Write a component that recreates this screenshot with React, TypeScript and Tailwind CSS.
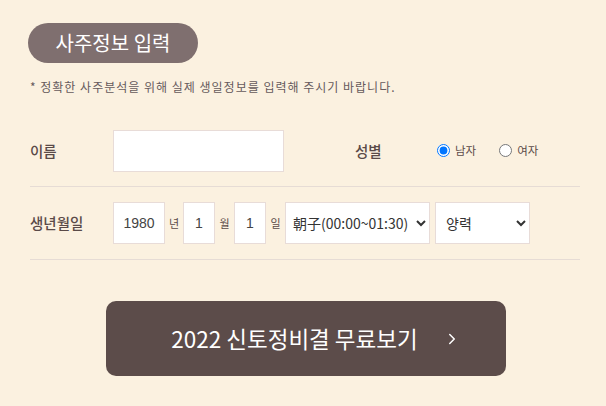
import { ChevronRight } from 'lucide-react'

export default function App() {
  return (
    <div className="w-[606px] h-[406px] bg-[#fbf1e0] pt-[23px] font-['Noto_Sans_CJK_KR','Noto_Sans',sans-serif] text-[#5a4a48] overflow-hidden">
      {/* Title pill */}
      <div className="ml-[28px] w-[170px] h-[40px] rounded-full bg-[#7f6f6f] text-white text-[20px] flex items-center justify-center">
        사주정보 입력
      </div>
      <p className="ml-[30px] mt-[15px] text-[12px] tracking-[1px] leading-[18px] text-[#665a5c]">
        * 정확한 사주분석을 위해 실제 생일정보를 입력해 주시기 바랍니다.
      </p>

      {/* Form rows */}
      <div className="ml-[30px] w-[550px] mt-[19px]">
        <div className="flex items-center h-[72px] border-b border-[#e6dcd5]">
          <span className="w-[83px] text-[14.5px] font-medium">이름</span>
          <input className="w-[171px] h-[42px] border border-[#e8dcd8] bg-white outline-none px-2 text-[14px]" />
          <span className="ml-[71px] w-[82px] text-[14.5px] font-medium">성별</span>
          <label className="flex items-center gap-[5px] text-[11.5px]">
            <input type="radio" name="gender" defaultChecked className="w-[13px] h-[13px] m-0" />
            남자
          </label>
          <label className="flex items-center gap-[5px] text-[11.5px] ml-[23px]">
            <input type="radio" name="gender" className="w-[13px] h-[13px] m-0" />
            여자
          </label>
        </div>

        <div className="flex items-center h-[73px] border-b border-[#e6dcd5]">
          <span className="w-[83px] text-[14.5px] font-medium">생년월일</span>
          <input defaultValue="1980" className="w-[52px] h-[42px] border border-[#e8dcd8] bg-white outline-none text-center text-[14px] text-[#444] font-['Liberation_Sans',sans-serif]" />
          <span className="w-[18px] text-center text-[11px]">년</span>
          <input defaultValue="1" className="w-[32px] h-[42px] border border-[#e8dcd8] bg-white outline-none text-center text-[14px] text-[#444] font-['Liberation_Sans',sans-serif]" />
          <span className="w-[19px] text-center text-[11px]">월</span>
          <input defaultValue="1" className="w-[32px] h-[42px] border border-[#e8dcd8] bg-white outline-none text-center text-[14px] text-[#444] font-['Liberation_Sans',sans-serif]" />
          <span className="w-[19px] text-center text-[11px]">일</span>
          <select className="w-[145px] h-[42px] border border-[#e8dcd8] bg-white outline-none text-[14px] text-[#333] pl-[3px]">
            <option>朝子(00:00~01:30)</option>
          </select>
          <select className="ml-[5px] w-[95px] h-[42px] border border-[#e8dcd8] bg-white outline-none text-[14px] text-[#333] pl-[6px]">
            <option>양력</option>
            <option>음력</option>
          </select>
        </div>
      </div>

      {/* Submit */}
      <button className="ml-[106px] mt-[41px] w-[400px] h-[75px] rounded-[10px] bg-[#5c4c4a] text-white text-[22.5px] flex items-center justify-center gap-[25px] pl-[20px]">
        <span>2022 신토정비결 무료보기</span>
        <ChevronRight size={18} strokeWidth={2} />
      </button>
    </div>
  )
}
